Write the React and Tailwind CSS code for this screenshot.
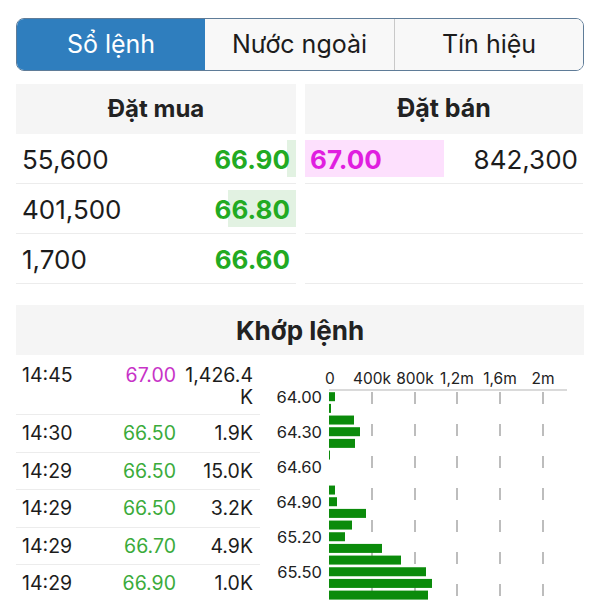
import React from 'react'

const font = { fontFamily: 'Inter, "Noto Sans", sans-serif' }

const buys = [
  { vol: '55,600', price: '66.90', bar: 9 },
  { vol: '401,500', price: '66.80', bar: 68 },
  { vol: '1,700', price: '66.60', bar: 0 },
]

const trades = [
  { t: '14:30', p: '66.50', v: '1.9K' },
  { t: '14:29', p: '66.50', v: '15.0K' },
  { t: '14:29', p: '66.50', v: '3.2K' },
  { t: '14:29', p: '66.70', v: '4.9K' },
  { t: '14:29', p: '66.90', v: '1.0K' },
]

// widths in px for each 0.10 price step starting at 64.00
const bars = [6, 2, 25, 31, 26, 1, 0, 0, 6, 8, 37, 23, 16, 53, 72, 97, 103, 99, 90]

function Chart(){
  const ticks = [
    { x: 70, l: '0' }, { x: 112, l: '400k' }, { x: 155, l: '800k' },
    { x: 197, l: '1,2m' }, { x: 240, l: '1,6m' }, { x: 283, l: '2m' },
  ]
  const labels = ['64.00', '64.30', '64.60', '64.90', '65.20', '65.50']
  const y0 = 39.7
  const step = 11.67
  return (
    <svg width="340" height="243" viewBox="0 0 340 243" style={font}>
      {ticks.map(t => (
        <text key={t.l} x={t.x} y="27" fontSize="15.5" textAnchor="middle" fill="#222">{t.l}</text>
      ))}
      <line x1="69" y1="33" x2="307" y2="33" stroke="#b5b5b5" strokeWidth="1" />
      {ticks.slice(1).map(t => (
        <line key={t.l} x1={t.x} y1="35" x2={t.x} y2="243" stroke="#9a9a9a" strokeWidth="1.3" strokeDasharray="12 20" />
      ))}
      {bars.map((w, i) => (
        w > 0 ? <rect key={i} x="69" y={y0 + i * step - 4.5} width={w} height="9" fill="#0b8b0b" /> : null
      ))}
      {labels.map((l, i) => (
        <text key={l} x="62" y={y0 + i * 3 * step + 6} fontSize="16.5" textAnchor="end" fill="#222">{l}</text>
      ))}
    </svg>
  )
}

export default function App(){
  return (
    <div className="w-[600px] h-[600px] overflow-hidden bg-white text-[#1c1c1c]" style={font}>
      <div className="px-[16px] pt-[18px]">
        <div className="flex h-[53px] rounded-[8px] border border-[#5f7c98] overflow-hidden text-[25px]">
          <div className="w-[188px] flex items-center justify-center bg-[#2f7ebe] text-white">Sổ lệnh</div>
          <div className="w-[190px] flex items-center justify-center bg-[#f8f8f8] border-r border-[#c9c9c9]">Nước ngoài</div>
          <div className="flex-1 flex items-center justify-center bg-[#f8f8f8]">Tín hiệu</div>
        </div>

        <div className="mt-[13px] grid grid-cols-[280px_278px] gap-x-[9px]">
          <div>
            <div className="h-[50px] bg-[#f5f5f5] flex items-center justify-center font-bold text-[24px] text-[#222]">Đặt mua</div>
            {buys.map(r => (
              <div key={r.price} className="relative h-[50px] border-b border-[#ececec] flex items-center justify-between pt-[2px] pl-[6px] pr-[6px]">
                {r.bar > 0 && <div className="absolute right-0 top-[6px] bottom-[6px] bg-[#e2f2e2]" style={{ width: r.bar }} />}
                <span className="relative text-[26px]">{r.vol}</span>
                <span className="relative text-[26px] font-bold text-[#22aa22]">{r.price}</span>
              </div>
            ))}
          </div>
          <div>
            <div className="h-[50px] bg-[#f5f5f5] flex items-center justify-center font-bold text-[25px] text-[#222]">Đặt bán</div>
            <div className="relative h-[50px] border-b border-[#ececec] flex items-center justify-between pt-[2px] pl-[5px] pr-[5px]">
              <div className="absolute left-0 top-[6px] bottom-[6px] w-[139px] bg-[#fde0fd]" />
              <span className="relative text-[26px] font-bold text-[#e01ee0]">67.00</span>
              <span className="relative text-[26px]">842,300</span>
            </div>
            <div className="h-[50px] border-b border-[#ececec]" />
            <div className="h-[50px] border-b border-[#ececec]" />
          </div>
        </div>

        <div className="mt-[21px] h-[50px] bg-[#f5f5f5] flex items-center justify-center font-bold text-[26px] text-[#222]">Khớp lệnh</div>
      </div>

      <div className="flex pl-[16px] mt-[2px]">
        <div className="w-[244px] text-[19.5px] leading-[22px]">
          <div className="grid grid-cols-[80px_74px_77px] pl-[6px] pt-[7px] pb-[6px] border-b border-[#ececec]">
            <span>14:45</span>
            <span className="text-right text-[#c733c7]">67.00</span>
            <span className="text-right">1,426.4<br />K</span>
          </div>
          {trades.map((r, i) => (
            <div key={i} className="grid grid-cols-[80px_74px_77px] items-center pl-[6px] h-[37.5px] border-b border-[#ececec]">
              <span>{r.t}</span>
              <span className="text-right text-[#3bab3b]">{r.p}</span>
              <span className="text-right">{r.v}</span>
            </div>
          ))}
        </div>
        <Chart />
      </div>
    </div>
  )
}
